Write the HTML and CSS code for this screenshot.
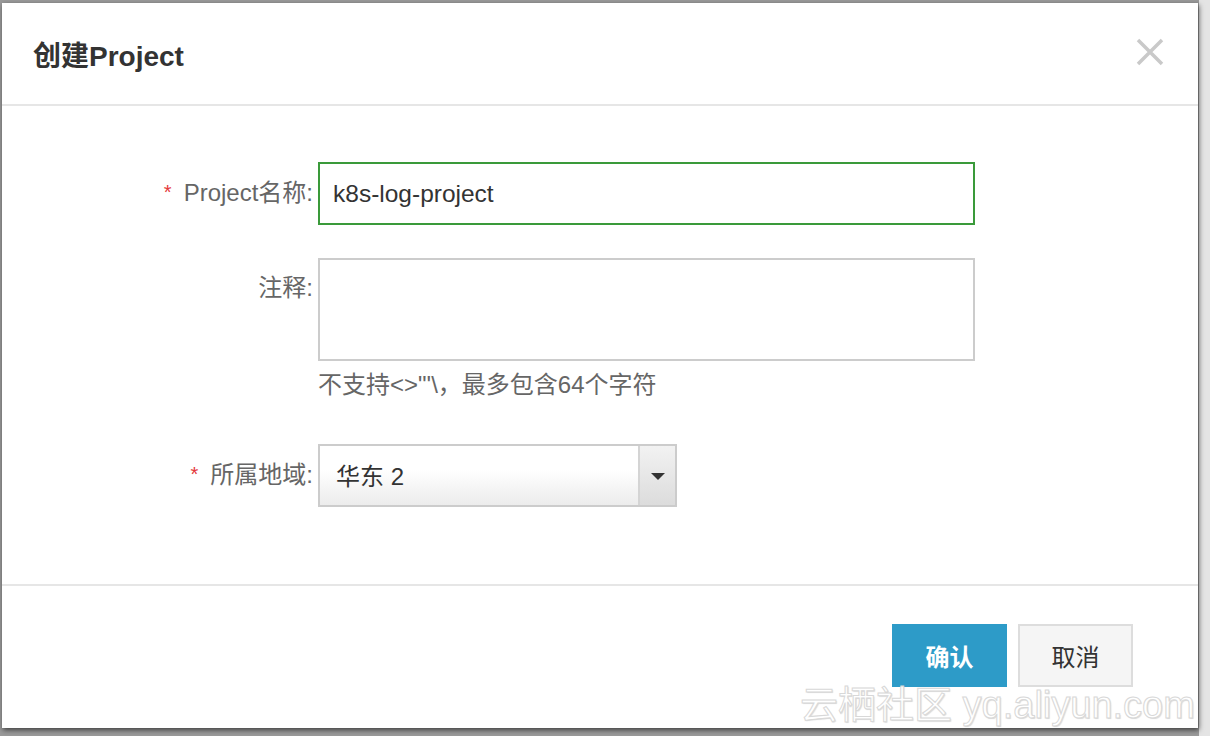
FILE: index.html
```html
<!DOCTYPE html>
<html lang="zh-CN">
<head>
    <meta charset="UTF-8">
    <title>创建Project</title>
    <link rel="stylesheet" href="styles.css">
</head>
<body>
    <div class="dialog">
        <div class="dialog-header">
            <h2 class="dialog-title">创建Project</h2>
            <span class="close-btn">
                <svg width="28" height="28" viewBox="0 0 28 28">
                    <path d="M2 2 L26 26 M26 2 L2 26" stroke="#c9c9c9" stroke-width="3.5" fill="none"/>
                </svg>
            </span>
        </div>

        <div class="dialog-body">
            <div class="form-row">
                <label class="form-label"><span class="required">*</span>Project名称:</label>
                <div class="form-field">
                    <div class="text-input active">k8s-log-project</div>
                </div>
            </div>

            <div class="form-row with-hint">
                <label class="form-label">注释:</label>
                <div class="form-field">
                    <div class="textarea"></div>
                    <p class="hint">不支持&lt;&gt;"'\，最多包含64个字符</p>
                </div>
            </div>

            <div class="form-row">
                <label class="form-label"><span class="required">*</span>所属地域:</label>
                <div class="form-field">
                    <div class="select">
                        <span class="select-value">华东 2</span>
                        <span class="select-arrow"></span>
                    </div>
                </div>
            </div>
        </div>

        <div class="dialog-footer">
            <button class="btn btn-primary">确认</button>
            <button class="btn btn-default">取消</button>
        </div>

        <div class="watermark">云栖社区 yq.aliyun.com</div>
    </div>
</body>
</html>
```

FILE: styles.css
```css
body {
    margin: 0;
    height: 736px;
    overflow: hidden;
    font-family: "Liberation Sans", "Noto Sans CJK SC", sans-serif;
    background: linear-gradient(to right, #9a9a9a 1199px, #e4e4e4 1199px);
}

.dialog {
    position: relative;
    margin: 3px 0 0 2px;
    width: 1196px;
    height: 725px;
    background-color: #fff;
    display: flex;
    flex-direction: column;
    box-shadow: 1px 2px 5px rgba(0,0,0,0.6);
}

.dialog-header {
    height: 101px;
    border-bottom: 2px solid #e6e6e6;
    display: flex;
    align-items: center;
    justify-content: space-between;
    padding: 0 34px 0 31px;
}

.dialog-title {
    margin: 0;
    font-size: 28px;
    font-weight: bold;
    color: #333;
}

.close-btn {
    display: flex;
    margin-top: -4px;
}

.dialog-body {
    flex: 1;
    padding-top: 56px;
}

.form-row {
    display: grid;
    grid-template-columns: 311px 657px;
    column-gap: 5px;
    margin-bottom: 33px;
}

.form-row.with-hint {
    margin-bottom: 43px;
}

.form-label {
    text-align: right;
    font-size: 24px;
    line-height: 60px;
    color: #666;
}

.required {
    color: #e4393c;
    font-size: 20px;
    margin-right: 12px;
    vertical-align: 2px;
}

.text-input {
    height: 59px;
    line-height: 59px;
    padding: 0 13px;
    font-size: 24.5px;
    color: #333;
    border: 2px solid #ccc;
}

.text-input.active {
    border-color: #3a9a3a;
}

.textarea {
    height: 99px;
    border: 2px solid #ccc;
}

.hint {
    margin: 8px 0 0;
    font-size: 24px;
    line-height: 32px;
    color: #666;
}

.select {
    width: 355px;
    height: 59px;
    border: 2px solid #ccc;
    display: flex;
    background: linear-gradient(#fff, #fff 40%, #ececec);
}

.select-value {
    flex: 1;
    padding-left: 16px;
    line-height: 62px;
    font-size: 24px;
    color: #333;
}

.select-arrow {
    width: 35px;
    border-left: 2px solid #d4d4d4;
    background: linear-gradient(#f2f2f2, #dcdcdc);
    display: flex;
    align-items: center;
    justify-content: center;
}

.select-arrow::after {
    content: "";
    border-left: 7px solid transparent;
    border-right: 7px solid transparent;
    border-top: 7px solid #333;
    margin-top: 2px;
}

.dialog-footer {
    height: 104px;
    border-top: 2px solid #e6e6e6;
    padding: 38px 65px 0 0;
    display: flex;
    justify-content: flex-end;
    align-items: flex-start;
    gap: 11px;
}

.btn {
    width: 115px;
    height: 63px;
    font-family: inherit;
    font-size: 24px;
    border: none;
    cursor: pointer;
}

.btn-primary {
    background-color: #2d9bc8;
    color: #fff;
    font-weight: bold;
}

.btn-default {
    background-color: #f5f5f5;
    color: #333;
    border: 2px solid #ddd;
}

.watermark {
    position: absolute;
    left: 798px;
    top: 682px;
    font-size: 38px;
    line-height: 40px;
    color: #fff;
    white-space: nowrap;
    -webkit-text-stroke: 1px #d8d8d8;
    text-shadow: 1px 1px 1px rgba(0,0,0,0.15);
}
```
